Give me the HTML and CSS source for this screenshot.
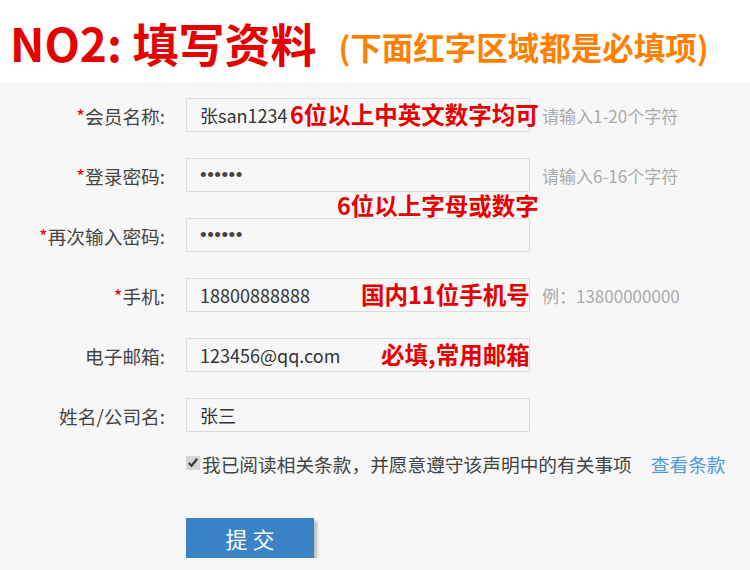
FILE: index.html
```html
<!DOCTYPE html>
<html lang="zh-CN">
<head>
<meta charset="UTF-8">
<title>填写资料</title>
<link rel="stylesheet" href="styles.css">
</head>
<body>

<!-- Title -->
<header class="title-bar">
    <h1>NO2: 填写资料</h1>
    <span class="title-note">(下面红字区域都是必填项)</span>
</header>

<!-- Form -->
<form class="reg-form">
    <div class="fields">
        <div class="row">
            <label><em>*</em>会员名称:</label>
            <input type="text" value="张san1234">
            <span class="hint">请输入1-20个字符</span>
            <span class="mark mark-name">6位以上中英文数字均可</span>
        </div>
        <div class="row">
            <label><em>*</em>登录密码:</label>
            <input type="password" class="pwd" value="123456">
            <span class="hint">请输入6-16个字符</span>
            <span class="mark mark-pwd">6位以上字母或数字</span>
        </div>
        <div class="row">
            <label><em>*</em>再次输入密码:</label>
            <input type="password" class="pwd" value="123456">
        </div>
        <div class="row">
            <label><em>*</em>手机:</label>
            <input type="text" value="18800888888">
            <span class="hint">例：13800000000</span>
            <span class="mark mark-phone">国内11位手机号</span>
        </div>
        <div class="row">
            <label>电子邮箱:</label>
            <input type="text" value="123456@qq.com">
            <span class="mark mark-mail">必填,常用邮箱</span>
        </div>
        <div class="row">
            <label>姓名/公司名:</label>
            <input type="text" value="张三">
        </div>
    </div>

    <div class="agree">
        <input type="checkbox" checked>
        <span>我已阅读相关条款，并愿意遵守该声明中的有关事项</span>
        <a href="#">查看条款</a>
    </div>

    <div class="submit-row">
        <button type="button">提 交</button>
    </div>
</form>

</body>
</html>
```

FILE: styles.css
```css
/* PAGE */
body {
    margin: 0;
    padding: 0;
    background-color: #f7f7f7;
    font-family: "Noto Sans CJK SC", "Noto Sans", sans-serif;
    color: #333;
}

/* TITLE */
.title-bar {
    background-color: #fff;
    height: 83px;
    display: flex;
    align-items: center;
    padding-left: 10px;
}
.title-bar h1 {
    margin: 0;
    font-size: 46px;
    font-weight: bold;
    color: #e60000;
    line-height: 1;
}
.title-note {
    margin-left: 22px;
    margin-top: 8px;
    font-size: 31.5px;
    font-weight: bold;
    color: #ff7f00;
}

/* FORM ROWS */
.reg-form {
    padding-top: 15px;
}
.fields {
    display: flex;
    flex-direction: column;
    gap: 26px;
}
.row {
    display: flex;
    align-items: center;
    height: 34px;
    position: relative;
}
.row label {
    width: 165px;
    margin-right: 21px;
    text-align: right;
    font-size: 18.7px;
    color: #444;
}
.row label em {
    font-style: normal;
    color: #e60012;
}
.row input {
    width: 344px;
    height: 34px;
    box-sizing: border-box;
    border: 1px solid #dcdcdc;
    background-color: #f7f7f7;
    padding: 0 13px;
    font-family: "Noto Sans CJK SC", "Noto Sans", sans-serif;
    font-size: 18px;
    color: #333;
    outline: none;
}
.row input.pwd {
    font-family: "Liberation Sans", sans-serif;
    font-size: 19px;
    letter-spacing: 0.5px;
    color: #444;
}
.hint {
    margin-left: 12px;
    font-size: 17px;
    color: #aaa;
}

/* RED NOTES OVER THE INPUTS */
.mark {
    position: absolute;
    font-size: 23.5px;
    font-weight: bold;
    color: #e60000;
    line-height: 1;
}
.mark-name  { left: 290px; top: 5px; }
.mark-pwd   { left: 337px; top: 36px; }
.mark-phone { left: 361px; top: 5px; }
.mark-mail  { left: 381px; top: 5px; }

/* AGREEMENT */
.agree {
    display: flex;
    align-items: center;
    height: 28px;
    margin-left: 186px;
    margin-top: 17px;
    font-size: 18.7px;
    color: #444;
}
.agree input {
    margin: 0 2px 0 0;
    width: 14px;
    height: 14px;
    accent-color: #d6d6d6;
}
.agree a {
    margin-left: 19px;
    color: #4a9ad8;
    text-decoration: none;
}

/* SUBMIT */
.submit-row {
    margin-left: 186px;
    margin-top: 41px;
}
.submit-row button {
    width: 128px;
    height: 40px;
    border: none;
    background-color: #3a83c8;
    color: #fff;
    font-family: "Noto Sans CJK SC", sans-serif;
    font-size: 22px;
    box-shadow: 3px 3px 3px #bbb;
    cursor: pointer;
}
```
